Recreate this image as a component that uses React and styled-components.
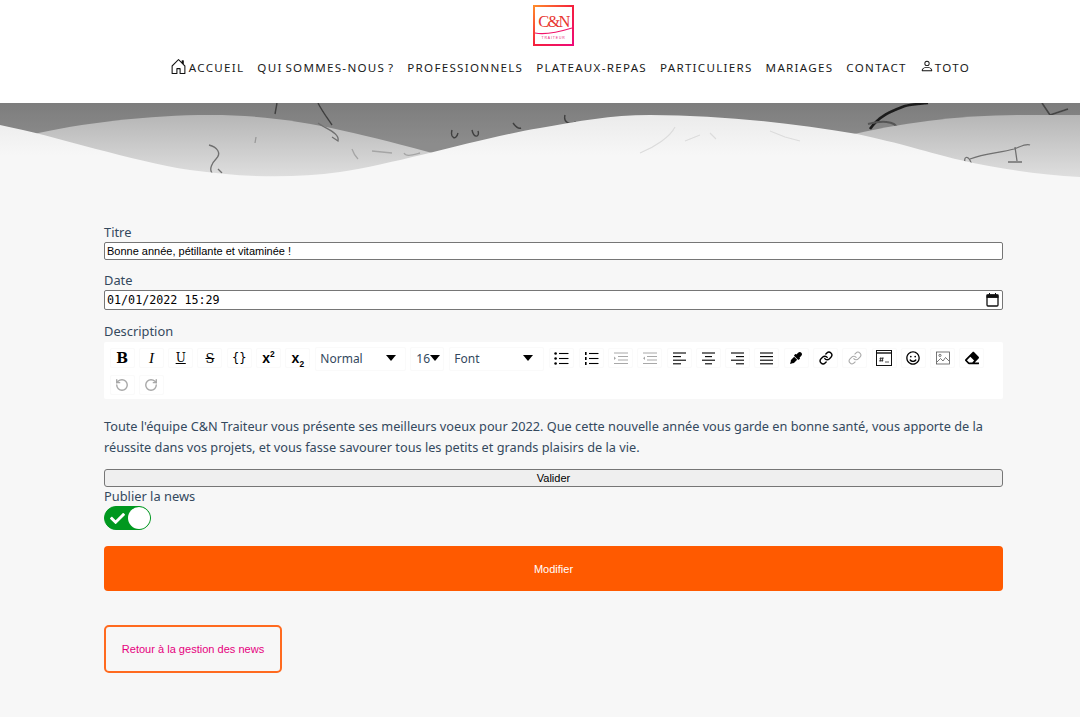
import React from 'react';
import styled, { createGlobalStyle } from 'styled-components';
import { FaEyeDropper, FaRegSmile, FaEraser, FaCheck } from 'react-icons/fa';
import { BsHouseDoor, BsPerson } from 'react-icons/bs';
import { LuLink, LuRotateCcw, LuRotateCw } from 'react-icons/lu';

const TEXT_FONT = "'Noto Sans', sans-serif";

const GlobalStyle = createGlobalStyle`
    html, body {
        margin: 0;
        padding: 0;
        height: 717px;
        overflow: hidden;
        background: #f7f7f7;
        font-family: ${TEXT_FONT};
    }
`;

const Header = styled.header`
    height: 103px;
    background: #fff;
    display: flex;
    flex-direction: column;
    align-items: center;
    padding-top: 5px;
    box-sizing: border-box;
`;

const LogoBox = styled.svg`
    width: 42px;
    height: 42px;
    margin-left: 27px;
    display: block;
`;

const Nav = styled.nav`
    display: flex;
    align-items: center;
    gap: 13px;
    margin-top: 13px;
    padding-left: 60px;
`;

const NavLink = styled.a`
    display: flex;
    align-items: center;
    font-size: 11.6px;
    letter-spacing: 1.28px;
    word-spacing: -1.5px;
    color: #1a1a1a;
    white-space: nowrap;
    svg {
        font-size: ${(p) => p.$iconSize || 16}px;
        color: #111;
        margin: -3px ${(p) => p.$iconGap ?? 1}px 0 0;
    }
`;

const WaveArt = styled.svg`
    display: block;
    width: 1080px;
    height: 80px;
`;

const Main = styled.main`
    padding: 40px 77px 0 104px;
`;

const Label = styled.div`
    font-size: 12.85px;
    line-height: 18px;
    color: #34495e;
`;

const TextInput = styled.input`
    display: block;
    width: 100%;
    box-sizing: border-box;
    height: 18px;
    margin: 1px 0 11px;
    padding: 0 2px;
    border: 1px solid #767676;
    border-radius: 2px;
    background: #fff;
    color: #000;
    font-family: 'Liberation Sans', sans-serif;
    font-size: 11px;
    outline: none;
`;

const DateField = styled.div`
    display: flex;
    align-items: center;
    justify-content: space-between;
    height: 20px;
    box-sizing: border-box;
    margin: 1px 0 12px;
    padding: 0 3px 0 2px;
    border: 1px solid #767676;
    border-radius: 2px;
    background: #fff;
    font-family: 'DejaVu Sans Mono', monospace;
    font-size: 11.7px;
    color: #000;
`;

const Toolbar = styled.div`
    background: #fff;
    box-sizing: border-box;
    height: 57px;
    margin-top: 2px;
    padding: 5px 6px 0 3.5px;
    border-radius: 2px;
    display: flex;
    flex-wrap: wrap;
    align-content: flex-start;
    row-gap: 3px;
`;

const ToolButton = styled.span`
    width: 25px;
    height: 20px;
    margin: 1px ${(p) => p.$mr ?? 2.15}px 0 2.15px;
    display: flex;
    align-items: center;
    justify-content: center;
    border: 1px solid #fafafa;
    border-radius: 2px;
    box-sizing: border-box;
    color: ${(p) => (p.$off ? '#a8a8a8' : '#000')};
    font-size: 12px;
`;

const Glyph = styled.span`
    font-family: ${(p) => p.$font || "'DejaVu Serif', serif"};
    font-size: ${(p) => p.$size || 12}px;
    font-weight: ${(p) => p.$weight || 400};
    font-style: ${(p) => (p.$italic ? 'italic' : 'normal')};
    text-decoration: ${(p) => p.$line || 'none'};
    line-height: 1;
    sup, sub {
        font-size: 0.6em;
        line-height: 0;
    }
`;

const ToolSelect = styled.span`
    width: ${(p) => p.$w}px;
    height: 24px;
    margin-right: ${(p) => p.$mr ?? 4}px;
    box-sizing: border-box;
    border: 1px solid #fafafa;
    border-radius: 2px;
    padding: 0 ${(p) => p.$pr ?? 9}px 1px ${(p) => p.$pl ?? 4}px;
    display: flex;
    align-items: center;
    justify-content: space-between;
    font-size: 12px;
    color: #34495e;
    &::after {
        content: '';
        border-left: 5px solid transparent;
        border-right: 5px solid transparent;
        border-top: 6px solid #000;
        margin-top: -2px;
    }
`;

const Paragraph = styled.p`
    margin: 17px 0 11px;
    font-size: 12.72px;
    line-height: 21px;
    color: #34495e;
`;

const PlainButton = styled.button`
    display: block;
    width: 100%;
    height: 18px;
    padding: 0;
    margin: 0;
    background: #efefef;
    border: 1px solid #767676;
    border-radius: 3px;
    font-family: 'Liberation Sans', sans-serif;
    font-size: 11px;
    color: #000;
`;

const Toggle = styled.div`
    width: 47px;
    height: 24px;
    margin-top: 1px;
    box-sizing: border-box;
    border-radius: 12px;
    background: #00981f;
    border: 1px solid #00981f;
    display: flex;
    align-items: center;
    justify-content: space-between;
    padding-left: 5px;
    color: #fff;
    font-size: 15px;
    &::after {
        content: '';
        width: 22px;
        height: 22px;
        border-radius: 50%;
        background: #fff;
    }
`;

const SubmitButton = styled.button`
    display: block;
    width: 100%;
    height: 45px;
    margin-top: 16px;
    border: none;
    border-radius: 4px;
    background: #ff5a00;
    color: #fff;
    font-family: 'Liberation Sans', sans-serif;
    font-size: 11px;
`;

const BackLink = styled.a`
    display: flex;
    align-items: center;
    justify-content: center;
    width: 178px;
    height: 48px;
    box-sizing: border-box;
    margin-top: 34px;
    border: 2px solid #ff6a1f;
    border-radius: 5px;
    color: #e6007e;
    font-family: 'Liberation Sans', sans-serif;
    font-size: 11.05px;
`;

function Lines({ rows }) {
    // petites icones de lignes (alignements)
    return (
        <svg width="15" height="13" viewBox="0 0 15 13" stroke="currentColor" strokeWidth="1.1" fill="none">
            {rows.map(([x1, x2], i) => (
                <line key={i} x1={x1} x2={x2} y1={1 + i * 3.6} y2={1 + i * 3.6} />
            ))}
        </svg>
    );
}

function ListIcon({ ordered }) {
    return (
        <svg width="15" height="13" viewBox="0 0 15 13" fill="currentColor" stroke="currentColor">
            {[1.5, 6.5, 11.5].map((y) => (
                <g key={y}>
                    <line x1="5" x2="14.5" y1={y} y2={y} strokeWidth="1.1" />
                    {ordered
                        ? <rect x="1" y={y - 1.5} width="1.6" height="3" stroke="none" />
                        : <circle cx="1.6" cy={y} r="1.3" stroke="none" />}
                </g>
            ))}
        </svg>
    );
}

function IndentIcon({ flip }) {
    return (
        <svg width="15" height="13" viewBox="0 0 15 13" stroke="currentColor" strokeWidth="1" fill="none">
            <line x1="1" x2="15" y1="1" y2="1" />
            <line x1="5" x2="15" y1="4.5" y2="4.5" />
            <line x1="5" x2="15" y1="8" y2="8" />
            <line x1="1" x2="15" y1="11.5" y2="11.5" />
            <path d={flip ? 'M3 4.5L1 6.3L3 8' : 'M1 4.5L3 6.3L1 8'} fill="currentColor" stroke="none" />
        </svg>
    );
}

function EmbedIcon() {
    return (
        <svg width="16" height="16" viewBox="0 0 16 16" fill="none" stroke="#111" strokeWidth="1">
            <rect x="0.5" y="0.5" width="15" height="15" />
            <line x1="0.5" x2="15.5" y1="3" y2="3" strokeWidth="1.4" />
            <path d="M5 7L4 12M7 7L6 12M3.5 8.6H7.5M3.3 10.4H7.3M9 12H13" strokeWidth="0.7" />
        </svg>
    );
}

function PictureIcon() {
    return (
        <svg width="14" height="14" viewBox="0 0 14 14" fill="none" stroke="#555" strokeWidth="0.8">
            <rect x="0.5" y="1" width="13" height="12" />
            <circle cx="4" cy="4.4" r="1.1" />
            <path d="M1 11L4.5 7.5L7 10L9.5 6.5L13 10" />
        </svg>
    );
}

function Logo() {
    return (
        <LogoBox viewBox="0 0 42 42">
            <defs>
                <linearGradient id="logoEdge" x1="0" y1="0" x2="1" y2="1">
                    <stop offset="0" stopColor="#ff8a2a" />
                    <stop offset="0.5" stopColor="#f5203c" />
                    <stop offset="1" stopColor="#ee0a78" />
                </linearGradient>
            </defs>
            <rect x="1" y="1" width="39" height="39" fill="#fff" stroke="url(#logoEdge)" strokeWidth="2" />
            <text x="20.5" y="22" textAnchor="middle" fontFamily="'Liberation Serif', serif" fontSize="16.5" letterSpacing="-1.8" fill="#e8352f">C&amp;N</text>
            <path d="M2 28C12 30 26 27 39 23" fill="none" stroke="#f0146a" strokeWidth="1.1" />
            <text x="20.5" y="33.5" textAnchor="middle" fontFamily="'Liberation Sans', sans-serif" fontSize="3.4" letterSpacing="0.9" fill="#e8207a">TRAITEUR</text>
        </LogoBox>
    );
}

function Waves() {
    return (
        <WaveArt viewBox="0 0 1080 80">
            <defs>
                <linearGradient id="sky" x1="0" y1="0" x2="0" y2="1">
                    <stop offset="0" stopColor="#7d7d7d" />
                    <stop offset="0.5" stopColor="#8c8c8c" />
                </linearGradient>
                <linearGradient id="backWave" x1="0" y1="0" x2="0" y2="1">
                    <stop offset="0" stopColor="#b6b6b6" />
                    <stop offset="0.9" stopColor="#dedede" />
                </linearGradient>
                <linearGradient id="frontWave" x1="0" y1="0" x2="0" y2="1">
                    <stop offset="0" stopColor="#ebebeb" />
                    <stop offset="0.6" stopColor="#f7f7f7" />
                </linearGradient>
                <filter id="inkBlur">
                    <feGaussianBlur stdDeviation="0.7" />
                </filter>
            </defs>
            <rect width="1080" height="80" fill="url(#sky)" />
            {/* traces d'encre du fond */}
            <g fill="none" stroke="#3f3f3f" strokeWidth="1.4" filter="url(#inkBlur)">
                <path d="M277 0L275 11M318 0C322 8 328 16 332 22" />
                <path d="M452 27C450 35 456 38 458 30M472 27C474 36 480 34 478 28M513 20C516 24 519 26 521 25M565 12C563 20 570 22 576 19" />
                <path d="M870 26C880 12 892 8 905 3C912 1 920 1 928 0" stroke="#1c1c1c" strokeWidth="2.6" />
                <path d="M868 21C880 18 895 17 898 26" stroke="#555" strokeWidth="2" />
                <path d="M1042 0L1050 12L1045 19M1050 12L1068 6" stroke="#444" strokeWidth="1.6" />
            </g>
            {/* vagues arriere */}
            <path d="M30 32C80 20 150 12 210 12C290 12 350 28 440 52L300 80H30Z" fill="url(#backWave)" />
            <path d="M845 33C900 20 960 12 1020 12C1045 12 1065 12 1080 12V80H845Z" fill="url(#backWave)" />
            <g fill="none" stroke="#6f6f6f" strokeWidth="1.3" filter="url(#inkBlur)">
                <path d="M318 20C326 26 340 30 338 38L332 34" />
                <path d="M209 42C217 44 222 50 216 56C212 60 209 66 212 70M218 66L222 70" />
                <path d="M256 34L255 40" stroke="#999" />
                <path d="M352 46C354 52 356 54 358 56M372 48L392 50M404 50C406 54 412 52 420 50" stroke="#a5a5a5" />
                <path d="M966 62C962 54 968 50 972 62M970 56C985 50 1000 50 1014 46C1020 44 1026 40 1030 42M1015 44L1017 58M1008 59H1022" />
            </g>
            {/* vague de devant */}
            <path d="M0 22C60 34 130 58 190 67C240 74 290 76 340 69C400 60 480 35 540 25C580 18 610 12 650 12C720 12 790 20 857 31C900 40 930 50 960 57C1000 66 1040 72 1080 74V80H0Z" fill="url(#frontWave)" />
            <g fill="none" stroke="#dcdcdc" strokeWidth="1.2" filter="url(#inkBlur)">
                <path d="M640 50C655 44 670 34 675 24M685 38L700 32M710 30L716 36M770 28L785 34L800 38" />
            </g>
        </WaveArt>
    );
}

function App() {
    return (
        <>
            <GlobalStyle />
            <Header>
                <Logo />
                <Nav>
                    <NavLink $iconSize={17} $iconGap={2}><BsHouseDoor />ACCUEIL</NavLink>
                    <NavLink>QUI SOMMES-NOUS ?</NavLink>
                    <NavLink>PROFESSIONNELS</NavLink>
                    <NavLink>PLATEAUX-REPAS</NavLink>
                    <NavLink>PARTICULIERS</NavLink>
                    <NavLink>MARIAGES</NavLink>
                    <NavLink>CONTACT</NavLink>
                    <NavLink $iconSize={14}><BsPerson />TOTO</NavLink>
                </Nav>
            </Header>
            <Waves />
            <Main>
                <Label>Titre</Label>
                <TextInput readOnly value="Bonne année, pétillante et vitaminée !" />
                <Label>Date</Label>
                <DateField>
                    <span>01/01/2022 15:29</span>
                    <svg width="13" height="14" viewBox="0 0 13 14" fill="none" stroke="#111">
                        <rect x="1" y="2" width="11" height="11" rx="1" strokeWidth="1.3" />
                        <rect x="1" y="2" width="11" height="2.4" fill="#111" />
                        <line x1="3.5" x2="3.5" y1="0" y2="2" />
                        <line x1="9.5" x2="9.5" y1="0" y2="2" />
                    </svg>
                </DateField>
                <Label>Description</Label>
                <Toolbar>
                    <ToolButton><Glyph $size={14} $weight={700}>B</Glyph></ToolButton>
                    <ToolButton><Glyph $font="'Liberation Serif', serif" $size={15} $italic>I</Glyph></ToolButton>
                    <ToolButton><Glyph $size={12} $line="underline">U</Glyph></ToolButton>
                    <ToolButton><Glyph $size={13} $line="line-through">S</Glyph></ToolButton>
                    <ToolButton><Glyph $font="'DejaVu Sans Mono', monospace" $size={12}>{'{}'}</Glyph></ToolButton>
                    <ToolButton><Glyph $font="'Liberation Sans', sans-serif" $size={14} $weight={700}>x<sup>2</sup></Glyph></ToolButton>
                    <ToolButton $mr={5}><Glyph $font="'Liberation Sans', sans-serif" $size={14} $weight={700}>x<sub>2</sub></Glyph></ToolButton>
                    <ToolSelect $w={91}>Normal</ToolSelect>
                    <ToolSelect $w={34} $pr={4} $pl={5} $mr={5}>16</ToolSelect>
                    <ToolSelect $w={95} $pr={10} $mr={3}>Font</ToolSelect>
                    <ToolButton><ListIcon /></ToolButton>
                    <ToolButton><ListIcon ordered /></ToolButton>
                    <ToolButton $off><IndentIcon /></ToolButton>
                    <ToolButton $off><IndentIcon flip /></ToolButton>
                    <ToolButton><Lines rows={[[1, 14], [1, 9], [1, 14], [1, 9]]} /></ToolButton>
                    <ToolButton><Lines rows={[[1, 14], [4, 11], [1, 14], [4, 11]]} /></ToolButton>
                    <ToolButton><Lines rows={[[1, 14], [6, 14], [1, 14], [6, 14]]} /></ToolButton>
                    <ToolButton><Lines rows={[[1, 14], [1, 14], [1, 14], [1, 14]]} /></ToolButton>
                    <ToolButton><FaEyeDropper size={12} /></ToolButton>
                    <ToolButton><LuLink size={14} strokeWidth={2.4} /></ToolButton>
                    <ToolButton $off><LuLink size={14} strokeWidth={1.8} /></ToolButton>
                    <ToolButton><EmbedIcon /></ToolButton>
                    <ToolButton><FaRegSmile size={14} /></ToolButton>
                    <ToolButton><PictureIcon /></ToolButton>
                    <ToolButton><FaEraser size={14} /></ToolButton>
                    <ToolButton $off><LuRotateCcw size={14} strokeWidth={2.4} /></ToolButton>
                    <ToolButton $off><LuRotateCw size={14} strokeWidth={2.4} /></ToolButton>
                </Toolbar>
                <Paragraph>
                    Toute l'équipe C&amp;N Traiteur vous présente ses meilleurs voeux pour 2022. Que cette nouvelle année vous garde en bonne santé, vous apporte de la réussite dans vos projets, et vous fasse savourer tous les petits et grands plaisirs de la vie.
                </Paragraph>
                <PlainButton>Valider</PlainButton>
                <Label>Publier la news</Label>
                <Toggle><FaCheck /></Toggle>
                <SubmitButton>Modifier</SubmitButton>
                <BackLink>Retour à la gestion des news</BackLink>
            </Main>
        </>
    );
}

export default App;
